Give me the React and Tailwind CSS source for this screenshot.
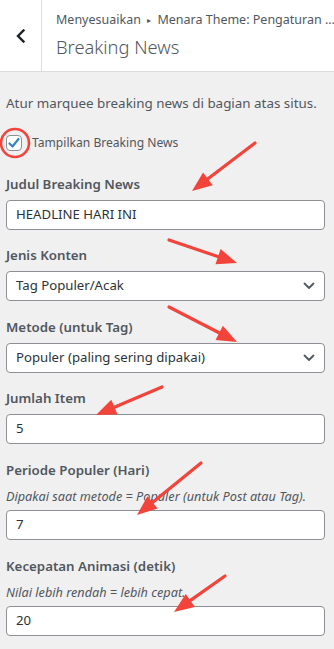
import React from "react";

function Arrow({ x1, y1, x2, y2 }) {
  const dx = x2 - x1;
  const dy = y2 - y1;
  const len = Math.sqrt(dx * dx + dy * dy);
  const ux = dx / len;
  const uy = dy / len;
  const hl = 20;
  const hw = 8;
  const bx = x2 - ux * hl;
  const by = y2 - uy * hl;
  const px = -uy;
  const py = ux;
  const pts = `${x2},${y2} ${bx + px * hw},${by + py * hw} ${bx - px * hw},${by - py * hw}`;
  return (
    <g>
      <line x1={x1} y1={y1} x2={bx + ux * 2} y2={by + uy * 2} stroke="#f2443a" strokeWidth="3.2" strokeLinecap="round" />
      <polygon points={pts} fill="#f2443a" />
    </g>
  );
}

function Chevron() {
  return (
    <svg width="12" height="8" viewBox="0 0 12 8" className="shrink-0">
      <path d="M1.5 1.5 L6 6 L10.5 1.5" fill="none" stroke="#50575e" strokeWidth="1.8" strokeLinecap="round" strokeLinejoin="round" />
    </svg>
  );
}

function Label({ children }) {
  return <div className="text-[13.3px] leading-[20px] font-semibold text-[#50575e] mb-[6px]">{children}</div>;
}

function Desc({ children }) {
  return <div className="text-[12.7px] leading-[20px] italic text-[#50575e] mb-[4px]">{children}</div>;
}

function TextInput({ value }) {
  return (
    <div className="h-[30px] rounded-[4px] border border-[#8c8f94] bg-white flex items-center px-[9px] text-[13.2px] text-[#2c3338]">
      {value}
    </div>
  );
}

function Select({ value }) {
  return (
    <div className="h-[30px] rounded-[4px] border border-[#8c8f94] bg-white flex items-center justify-between pl-[9px] pr-[9px] text-[13.2px] text-[#2c3338]">
      <span>{value}</span>
      <Chevron />
    </div>
  );
}

export default function App() {
  return (
    <div
      className="relative w-[334px] h-[649px] overflow-hidden bg-[#f0f0f1]"
      style={{ fontFamily: '"Noto Sans", "Open Sans", sans-serif' }}
    >
      <div className="h-[72px] bg-white border-b border-[#dcdcde] flex">
        <div className="w-[42px] shrink-0 border-r border-[#dcdcde] flex items-center justify-center">
          <svg width="12" height="14" viewBox="0 0 12 14">
            <path d="M8.5 1.5 L3 7 L8.5 12.5" fill="none" stroke="#1d2327" strokeWidth="2.4" strokeLinecap="square" />
          </svg>
        </div>
        <div className="flex-1 min-w-0 pl-[14px] pt-[10px] text-[#50575e]">
          <div className="text-[12.5px] leading-[20px] whitespace-nowrap overflow-hidden">
            Menyesuaikan <span className="text-[8px] align-[1px] mx-[3px]">▸</span> Menara Theme: Pengaturan …
          </div>
          <div className="text-[18.3px] leading-[28px] font-light mt-[3px]">Breaking News</div>
        </div>
      </div>

      <div className="pl-[6px] pr-[9px] pt-[21px]">
        <div className="text-[13.4px] leading-[20px] text-[#50575e]">Atur marquee breaking news di bagian atas situs.</div>

        <div className="mt-[20px] flex items-center h-[20px] text-[12.1px] text-[#50575e]">
          <div className="w-[16px] h-[16px] shrink-0 rounded-[4px] border border-[#8c8f94] bg-white flex items-center justify-center mr-[10px]">
            <svg width="14" height="14" viewBox="0 0 14 14">
              <path d="M2.5 7.5 L5.5 10.5 L11.5 3" fill="none" stroke="#3582c4" strokeWidth="2.2" strokeLinecap="round" strokeLinejoin="round" />
            </svg>
          </div>
          Tampilkan Breaking News
        </div>

        <div className="mt-[21px]">
          <Label>Judul Breaking News</Label>
          <TextInput value="HEADLINE HARI INI" />
        </div>

        <div className="mt-[15px]">
          <Label>Jenis Konten</Label>
          <Select value="Tag Populer/Acak" />
        </div>

        <div className="mt-[16px]">
          <Label>Metode (untuk Tag)</Label>
          <Select value="Populer (paling sering dipakai)" />
        </div>

        <div className="mt-[15px]">
          <Label>Jumlah Item</Label>
          <TextInput value="5" />
        </div>

        <div className="mt-[16px]">
          <Label>Periode Populer (Hari)</Label>
          <Desc>Dipakai saat metode = Populer (untuk Post atau Tag).</Desc>
          <TextInput value="7" />
        </div>

        <div className="mt-[16px]">
          <Label>Kecepatan Animasi (detik)</Label>
          <Desc>Nilai lebih rendah = lebih cepat.</Desc>
          <TextInput value="20" />
        </div>
      </div>

      <svg className="absolute inset-0 pointer-events-none" width="334" height="649" viewBox="0 0 334 649">
        <circle cx="15" cy="143" r="14" fill="none" stroke="#f2443a" strokeWidth="2.6" />
        <Arrow x1={255} y1={143} x2={192} y2={191} />
        <Arrow x1={169} y1={240} x2={237} y2={263} />
        <Arrow x1={169} y1={307} x2={237} y2={342} />
        <Arrow x1={162} y1={387} x2={96} y2={415} />
        <Arrow x1={201} y1={463} x2={137} y2={515} />
        <Arrow x1={225} y1={576} x2={174} y2={612} />
      </svg>
    </div>
  );
}
